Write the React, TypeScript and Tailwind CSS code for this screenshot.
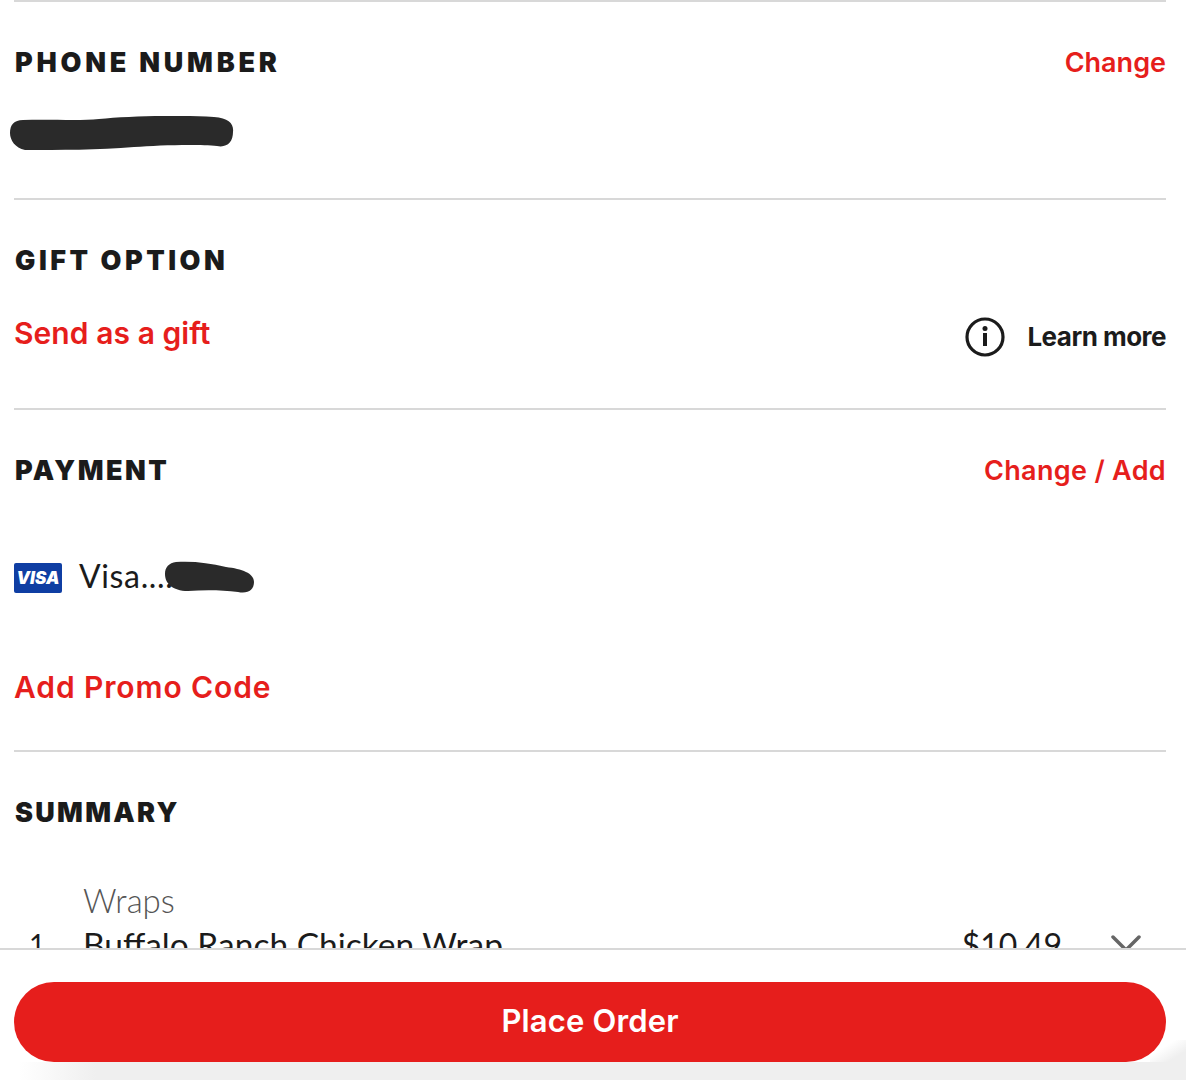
import React from "react";

const head = "font-['Inter',sans-serif] font-black text-[27px] leading-[34px] text-[#1b1b1b] pl-px";
const link = "font-['Inter',sans-serif] font-semibold text-[27px] leading-[34px] text-[#e61e1c]";
const big = "font-['Inter',sans-serif] font-semibold text-[30px] leading-[36px] text-[#e61e1c]";
const Divider = () => <div className="h-[2px] bg-[#d8d8d8]" />;

export default function App() {
  return (
    <div className="relative h-[1080px] w-[1186px] overflow-hidden bg-white flex flex-col">
      <div className="h-[948px] overflow-hidden px-[14px] shrink-0">
        <div className="w-[1152px]">
          <Divider />
          <section className="h-[196px] pt-[44px]">
            <div className="flex items-center justify-between">
              <h2 className={`${head} tracking-[0.14em]`}>PHONE NUMBER</h2>
              <a className={link}>Change</a>
            </div>
            <svg width="228" height="40" viewBox="0 0 228 40" className="mt-[36px] -ml-[5px] block">
              <path d="M14 4 C40 3 70 5 90 3 C120 0 170 -1 205 1 C220 2 225 8 224 16 C224 26 218 32 208 30 C190 28 150 29 125 31 C90 34 50 34 16 34 C6 32 1 24 1 17 C1 9 5 4 14 4 Z" fill="#2a2a2a" />
            </svg>
          </section>
          <Divider />
          <section className="h-[208px] pt-[44px]">
            <h2 className={`${head} tracking-[0.13em]`}>GIFT OPTION</h2>
            <div className="mt-[31px] flex items-center justify-between">
              <a className={`${big} tracking-[0.002em]`}>Send as a gift</a>
              <div className="flex items-center gap-[22px] mt-[8px]">
                <svg width="40" height="40" viewBox="0 0 40 40" fill="none">
                  <circle cx="20" cy="20" r="18" stroke="#1b1b1b" strokeWidth="3.2" />
                  <circle cx="20" cy="11.5" r="2.5" fill="#1b1b1b" />
                  <rect x="18" y="16" width="4" height="13" fill="#1b1b1b" />
                </svg>
                <span className="font-['Inter',sans-serif] font-bold text-[26px] leading-[34px] tracking-[-0.02em] text-[#1b1b1b]">Learn more</span>
              </div>
            </div>
          </section>
          <Divider />
          <section className="h-[340px] pt-[44px]">
            <div className="flex items-center justify-between">
              <h2 className={`${head} tracking-[0.09em]`}>PAYMENT</h2>
              <a className={`${link} tracking-[0.012em]`}>Change / Add</a>
            </div>
            <div className="relative mt-[70px] flex items-center h-[40px]">
              <div className="flex h-[30px] w-[48px] items-center justify-center rounded-[2px] bg-[#0f3ea3]">
                <span className="font-['Inter',sans-serif] font-black italic text-[17px] leading-none text-white">VISA</span>
              </div>
              <span className="ml-[17px] -mt-[4px] font-['Lato',sans-serif] text-[32px] leading-[40px] tracking-[0.02em] text-[#1b1b1b]">Visa....</span>
              <svg width="92" height="38" viewBox="0 0 92 38" className="absolute left-[150px] top-[1px]">
                <path d="M12 3 C30 2 45 4 62 8 C78 10 90 14 90 23 C90 31 84 35 74 33 C58 31 40 31 24 32 C8 32 1 24 1 15 C1 8 5 4 12 3 Z" fill="#2a2a2a" />
              </svg>
            </div>
            <a className={`${big} block mt-[71px] tracking-[0.03em]`}>Add Promo Code</a>
          </section>
          <Divider />
          <section className="pt-[44px]">
            <h2 className={`${head} tracking-[0.085em]`}>SUMMARY</h2>
            <div className="mt-[50px] flex">
              <span className="w-[69px] pl-[15px] pt-[45px] font-['Lato',sans-serif] text-[28px] leading-[38px] text-[#1b1b1b]">1</span>
              <div className="flex-1 font-['Lato',sans-serif]">
                <p className="text-[33px] font-light leading-[40px] text-[#555555]">Wraps</p>
                <p className="mt-[5px] text-[33.5px] leading-[38px] text-[#1b1b1b]">Buffalo Ranch Chicken Wrap</p>
              </div>
              <span className="mt-[46px] mr-[49px] font-['Lato',sans-serif] text-[32px] leading-[38px] text-[#1b1b1b]">$10.49</span>
              <svg width="30" height="18" viewBox="0 0 30 18" fill="none" className="mt-[55px] mr-[25px]">
                <path d="M2 2 L15 15 L28 2" stroke="#666666" strokeWidth="3.5" strokeLinecap="round" />
              </svg>
            </div>
          </section>
        </div>
      </div>
      <div className="h-[2px] shrink-0 bg-[#d8d8d8]" />
      <div className="relative flex-1 px-[14px] pt-[32px]">
        <div className="absolute bottom-0 left-0 right-0 h-[18px] bg-[linear-gradient(to_right,#ffffff_19px,#efefef_96px)]" />
        <div className="absolute bottom-[18px] right-0 h-[22px] w-[36px] bg-[linear-gradient(to_bottom_right,#ffffff_35%,#efefef_75%)]" />
        <button className="relative flex h-[80px] w-[1152px] items-center justify-center rounded-full bg-[#e61e1c] font-['Inter',sans-serif] text-[31px] font-semibold leading-[36px] tracking-[0.005em] text-white pb-[2px]">
          Place Order
        </button>
      </div>
    </div>
  );
}
